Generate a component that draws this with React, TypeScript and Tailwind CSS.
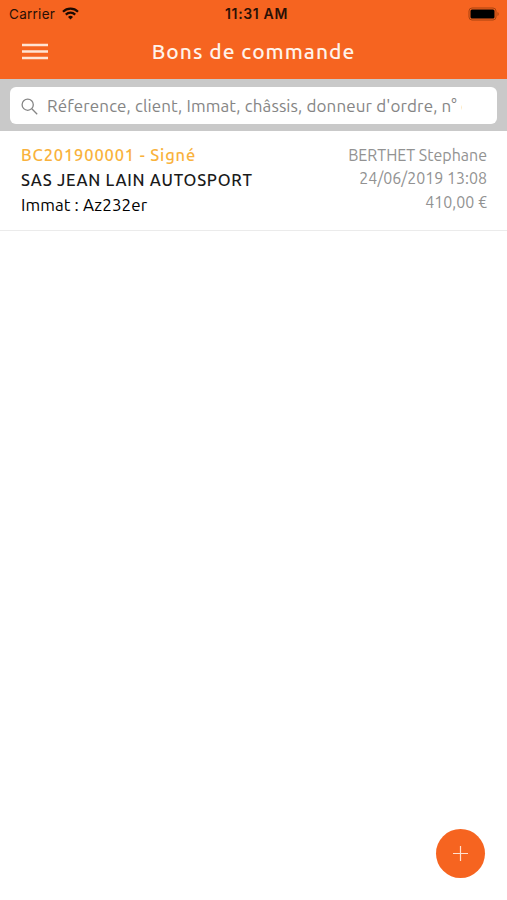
import React from 'react';

interface Order {
  id: string;
  reference: string;
  status: string;
  customer: string;
  plate: string;
  seller: string;
  date: string;
  amount: string;
}

const orders: Order[] = [
  {
    id: '1',
    reference: 'BC201900001',
    status: 'Signé',
    customer: 'SAS JEAN LAIN AUTOSPORT',
    plate: 'Az232er',
    seller: 'BERTHET Stephane',
    date: '24/06/2019 13:08',
    amount: '410,00 €',
  },
];

const StatusBar = () => (
  <div className="grid h-[28px] grid-cols-3 items-center pl-[9px] pr-[7px] font-['Inter','Liberation_Sans',sans-serif] text-[13.5px] leading-none text-[#2a1006]">
    <div className="flex items-center gap-[7px]">
      <span className="pt-px tracking-[0.02em]">Carrier</span>
      <svg width="17" height="13" viewBox="0 0 17 13" fill="none" stroke="#1c0a02" strokeWidth="2.2" className="-mt-0.5">
        <path d="M1 4.8a10.6 10.6 0 0 1 15 0" />
        <path d="M3.8 7.6a6.7 6.7 0 0 1 9.4 0" />
        <path d="M8.5 12.4 6 9.9a3.6 3.6 0 0 1 5 0Z" fill="#1c0a02" stroke="none" />
      </svg>
    </div>
    <span className="pl-1 text-center text-[14px] font-semibold tracking-[0.65px] whitespace-nowrap">11:31 AM</span>
    <div className="flex items-center justify-end">
      <svg width="32" height="14" viewBox="0 0 32 14" fill="none" className="-mt-px">
        <rect x="1" y="1" width="27" height="12" rx="3" stroke="#a8430f" />
        <rect x="2.5" y="2.5" width="24" height="9" rx="1.5" fill="#000" />
        <path d="M29.5 5v4c1.6-.6 1.6-3.4 0-4Z" fill="#a8430f" />
      </svg>
    </div>
  </div>
);

const Header = () => (
  <header className="h-[79px] bg-[#f66420]">
    <StatusBar />
    <div className="grid h-[47px] grid-cols-[90px_1fr_90px] items-center">
      <button aria-label="Menu" className="ml-[22px]">
        <svg width="26" height="17" viewBox="0 0 26 17" stroke="#ffe4d4" strokeWidth="2.3">
          <path d="M0 2h26M0 8.5h26M0 15h26" />
        </svg>
      </button>
      <h1 className="pt-px text-center text-[21px] font-medium tracking-[1px] whitespace-nowrap text-[#fff3ea]">Bons de commande</h1>
    </div>
  </header>
);

const SearchBar = () => (
  <div className="h-[52px] bg-[#c9c9c9] px-[10px] pt-2">
    <label className="flex h-[37px] items-center rounded-[6px] bg-white pl-[11px]">
      <svg width="17" height="17" viewBox="0 0 17 17" fill="none" stroke="#858585" strokeWidth="1.3" className="mt-0.5 shrink-0">
        <circle cx="6.7" cy="6.7" r="5.6" />
        <path d="m10.8 10.8 5.4 5.4" />
      </svg>
      <input
        className="ml-[9px] w-[415px] bg-transparent pt-px text-[17px] tracking-[0.12px] outline-none placeholder:text-[#858585]"
        placeholder="Réference, client, Immat, châssis, donneur d'ordre, n° d"
      />
    </label>
  </div>
);

const OrderRow: React.FC<{ order: Order }> = ({ order }) => (
  <li className="flex h-[100px] justify-between border-b border-[#ebebeb] px-5 pt-3 whitespace-nowrap">
    <div className="pl-px text-[16.5px] leading-[24.5px] font-medium text-[#1a1a1a]">
      <p className="tracking-[0.84px] text-[#f9b23c]">{order.reference} - {order.status}</p>
      <p className="tracking-[0.72px]">{order.customer}</p>
      <p className="pt-px text-[17px] font-normal tracking-[0.1px] text-black">Immat : {order.plate}</p>
    </div>
    <div className="pt-px text-right text-[16px] leading-[23.4px] text-[#929292]">
      <p>{order.seller}</p>
      <p>{order.date}</p>
      <p>{order.amount}</p>
    </div>
  </li>
);

export default function App() {
  return (
    <div className="relative h-screen overflow-hidden bg-white font-['Ubuntu','Noto_Sans',sans-serif]">
      <Header />
      <SearchBar />
      <ul>
        {orders.map((order) => (
          <OrderRow key={order.id} order={order} />
        ))}
      </ul>
      <button
        aria-label="Ajouter"
        className="absolute right-[22px] bottom-[22px] flex size-[49px] items-center justify-center rounded-full bg-[#f66420]"
      >
        <svg width="15" height="15" viewBox="0 0 15 15" stroke="#ffe0cf" strokeWidth="1.2">
          <path d="M7.5 0v15M0 7.5h15" />
        </svg>
      </button>
    </div>
  );
}
